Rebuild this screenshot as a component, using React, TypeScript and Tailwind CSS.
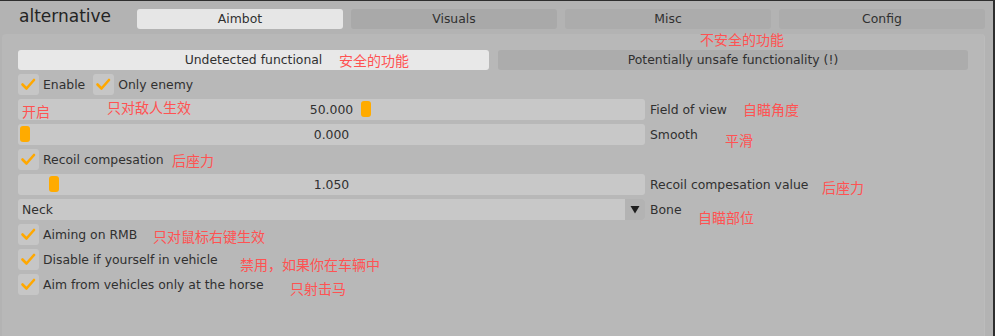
import React from 'react';

const ui = { fontFamily: '"DejaVu Sans", Verdana, sans-serif' };
const cjk = { fontFamily: '"Noto Sans CJK SC", "Noto Sans", sans-serif' };

const Check: React.FC = () => (
  <div className="w-[21px] h-[21px] rounded-[3px] bg-[#c6c6c6] flex items-center justify-center shrink-0">
    <svg width="21" height="21" viewBox="0 0 21 21">
      <polyline points="4.5,10.5 8.5,14.5 16,6" fill="none" stroke="#ffa800" strokeWidth="2.6" strokeLinecap="round" strokeLinejoin="round" />
    </svg>
  </div>
);

const CheckRow: React.FC<{ label: string; className?: string }> = ({ label, className = '' }) => (
  <div className={`flex items-center gap-1 h-[21px] ${className}`}>
    <Check />
    <span className="pt-[2px] text-[12.4px] text-[#303030] leading-none">{label}</span>
  </div>
);

const Slider: React.FC<{ value: string; grab: number; label: string }> = ({ value, grab, label }) => (
  <div className="flex items-center h-[21px]">
    <div className="relative w-[627px] h-[21px] rounded-[3px] bg-[#c8c8c8] flex items-center justify-center">
      <span className="pt-[2px] text-[12.4px] text-[#303030] leading-none">{value}</span>
      <div className="absolute top-[2px] w-[10px] h-[16px] rounded-[3px] bg-[#ffab00]" style={{ left: grab }} />
    </div>
    <span className="ml-[5px] pt-[2px] text-[12.4px] text-[#303030] leading-none">{label}</span>
  </div>
);

const notes: { text: string; x: number; y: number }[] = [
  { text: '安全的功能', x: 339, y: 60 },
  { text: '不安全的功能', x: 700, y: 39 },
  { text: '开启', x: 22, y: 111 },
  { text: '只对敌人生效', x: 107, y: 107 },
  { text: '自瞄角度', x: 743, y: 109 },
  { text: '平滑', x: 725, y: 140 },
  { text: '后座力', x: 172, y: 160 },
  { text: '后座力', x: 822, y: 187 },
  { text: '自瞄部位', x: 698, y: 217 },
  { text: '只对鼠标右键生效', x: 153, y: 236 },
  { text: '禁用，如果你在车辆中', x: 240, y: 264 },
  { text: '只射击马', x: 290, y: 288 },
];

export default function App() {
  return (
    <div className="relative w-[995px] h-[336px] overflow-hidden bg-[#2e2e2e]" style={ui}>
      <div className="flex h-full pt-[1px]">
        {/* Window */}
        <div className="w-[993px] h-[335px] bg-[#b3b3b3] flex flex-col">
          {/* Header */}
          <div className="flex items-start h-[33px]">
            <div className="w-[137px] pl-[19px] pt-[7px] text-[17px] text-[#232323] leading-none">alternative</div>
            <div className="flex gap-[8px] pt-[8px]">
              <div className="w-[206px] h-[20px] pt-[1px] rounded-[3px] bg-[#e6e6e6] flex items-center justify-center text-[12.4px] text-[#303030]">Aimbot</div>
              <div className="w-[206px] h-[20px] pt-[1px] rounded-[3px] bg-[#a9a9a9] flex items-center justify-center text-[12.4px] text-[#303030]">Visuals</div>
              <div className="w-[206px] h-[20px] pt-[1px] rounded-[3px] bg-[#acacac] flex items-center justify-center text-[12.4px] text-[#303030]">Misc</div>
              <div className="w-[206px] h-[20px] pt-[1px] rounded-[3px] bg-[#acacac] flex items-center justify-center text-[12.4px] text-[#303030]">Config</div>
            </div>
          </div>

          {/* Child panel */}
          <div className="ml-[2px] w-[983px] flex-1 rounded-t-[4px] bg-[#b8b8b8] border-r border-[#bcbcbc] pt-[16px] pl-[16px] pr-[16px] flex flex-col gap-[4px]">
            <div className="flex gap-[9px] h-[20px]">
              <div className="w-[471px] pt-[1px] rounded-[3px] bg-[#e8e8e8] flex items-center justify-center text-[12.4px] text-[#303030]">Undetected functional</div>
              <div className="w-[470px] pt-[1px] rounded-[3px] bg-[#acacac] flex items-center justify-center text-[12.4px] text-[#303030]">Potentially unsafe functionality (!)</div>
            </div>

            <div className="flex gap-[8px]">
              <CheckRow label="Enable" />
              <CheckRow label="Only enemy" />
            </div>

            <Slider value="50.000" grab={343} label="Field of view" />
            <Slider value="0.000" grab={2} label="Smooth" />
            <CheckRow label="Recoil compesation" />
            <Slider value="1.050" grab={31} label="Recoil compesation value" />

            <div className="flex items-center h-[21px]">
              <div className="w-[627px] h-[21px] rounded-[3px] bg-[#c8c8c8] flex items-center">
                <span className="flex-1 pl-[4px] pt-[2px] text-[12.4px] text-[#303030] leading-none">Neck</span>
                <div className="w-[20px] h-[21px] rounded-r-[3px] bg-[#b3b3b3] flex items-center justify-center">
                  <svg width="10" height="9" viewBox="0 0 10 9">
                    <polygon points="0.5,1 9.5,1 5,8.5" fill="#1e1e1e" />
                  </svg>
                </div>
              </div>
              <span className="ml-[5px] pt-[2px] text-[12.4px] text-[#303030] leading-none">Bone</span>
            </div>

            <CheckRow label="Aiming on RMB" />
            <CheckRow label="Disable if yourself in vehicle" />
            <CheckRow label="Aim from vehicles only at the horse" />
          </div>
        </div>
      </div>

      {/* annotations */}
      {notes.map((n, i) => (
        <span
          key={i}
          className="absolute text-[14px] leading-[14px] text-[#ff5252] whitespace-nowrap"
          style={{ ...cjk, left: n.x, top: n.y - 7 }}
        >
          {n.text}
        </span>
      ))}
    </div>
  );
}
